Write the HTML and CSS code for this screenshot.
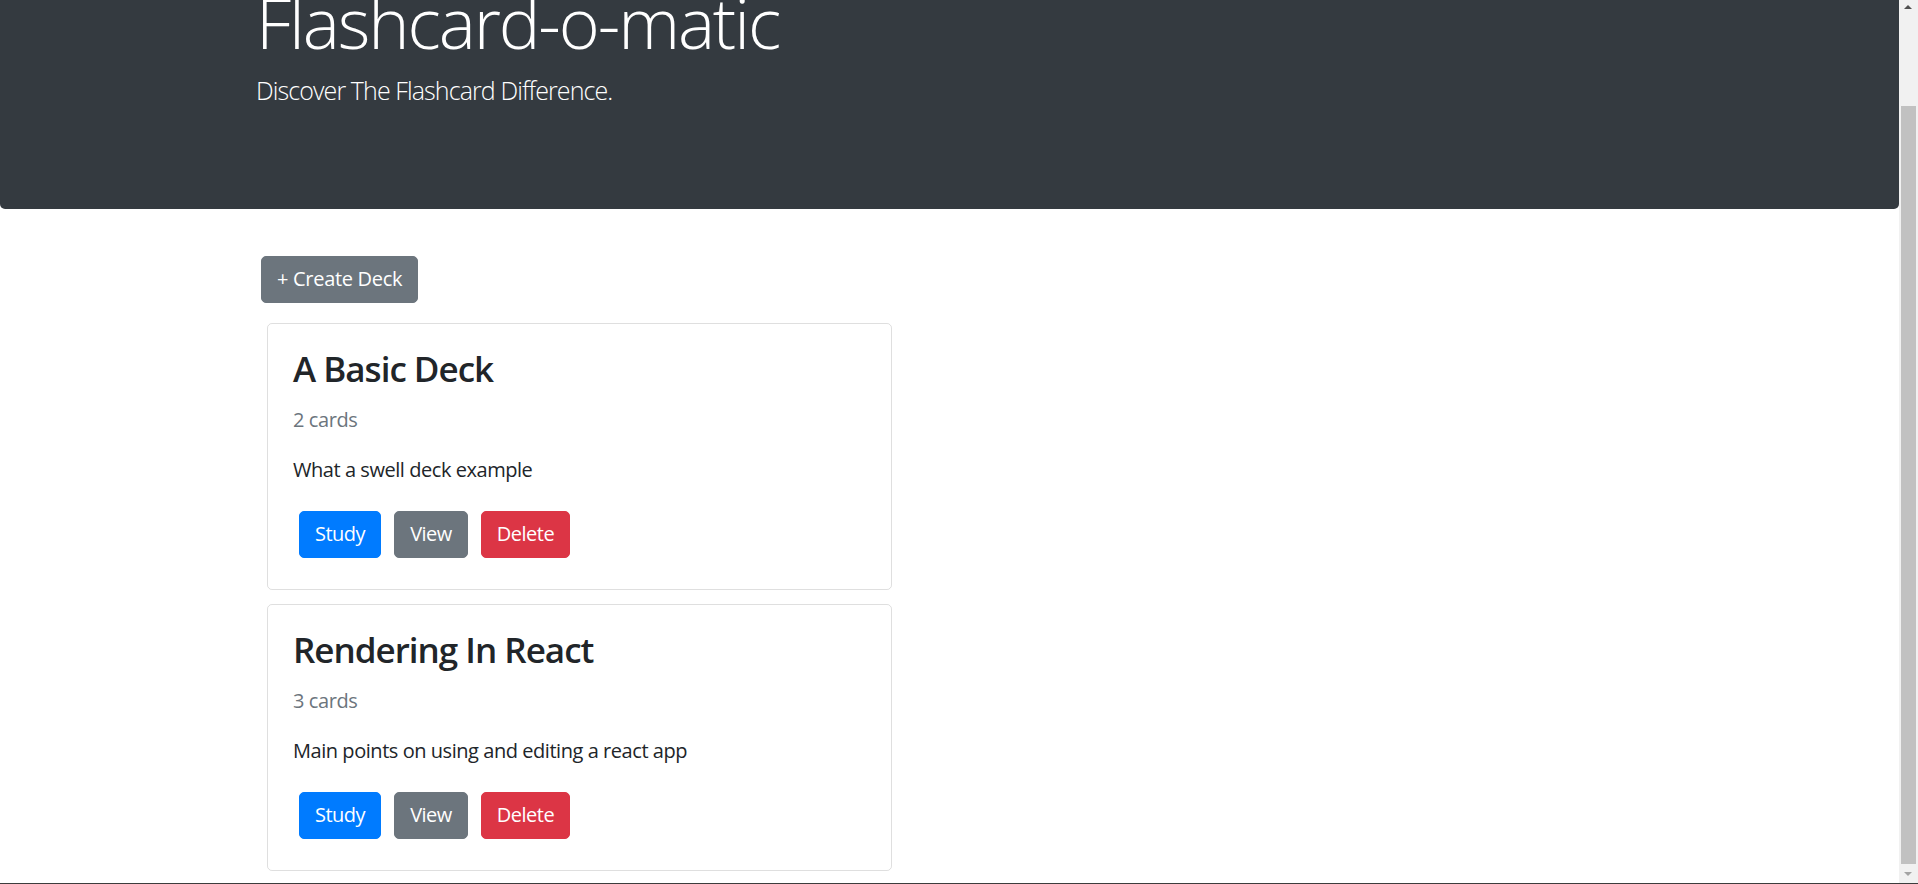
FILE: index.html
```html
<!DOCTYPE html>
<html lang="en">
<head>
<meta charset="utf-8">
<title>Flashcard-o-matic</title>
<link rel="stylesheet" href="styles.css">
</head>
<body>
<div class="page">
  <header class="jumbotron">
    <div class="container">
      <h1 class="display">Flashcard-o-matic</h1>
      <p class="lead">Discover The Flashcard Difference.</p>
    </div>
  </header>
  <main class="container">
    <button class="btn btn-secondary create-btn">+ Create Deck</button>
    <div class="deck-list">
      <div class="card">
        <h3 class="card-title">A Basic Deck</h3>
        <p class="card-count">2 cards</p>
        <p class="card-text">What a swell deck example</p>
        <div class="card-actions">
          <button class="btn btn-primary">Study</button>
          <button class="btn btn-secondary">View</button>
          <button class="btn btn-danger">Delete</button>
        </div>
      </div>
      <div class="card">
        <h3 class="card-title">Rendering In React</h3>
        <p class="card-count">3 cards</p>
        <p class="card-text">Main points on using and editing a react app</p>
        <div class="card-actions">
          <button class="btn btn-primary">Study</button>
          <button class="btn btn-secondary">View</button>
          <button class="btn btn-danger">Delete</button>
        </div>
      </div>
    </div>
  </main>
</div>
<div class="scrollbar">
  <span class="arrow arrow-up"></span>
  <span class="thumb"></span>
  <span class="arrow arrow-down"></span>
</div>
<div class="window-edge"></div>
</body>
</html>
```

FILE: styles.css
```css
html, body {
  margin: 0;
  padding: 0;
  height: 884px;
  overflow: hidden;
  background: #fff;
}

body {
  font-family: "Segoe UI", "Open Sans", "Noto Sans", sans-serif;
  color: #212529;
}

.page {
  margin-right: 19px;
}

.container {
  width: 1425px;
  margin: 0 auto;
  padding: 0 19px;
  box-sizing: border-box;
}

.jumbotron {
  background: #343a40;
  color: #fff;
  border-radius: 0 0 5px 5px;
  padding: 0 0 99px;
}

.display {
  margin: -20px 0 8px;
  font-size: 70px;
  line-height: 84px;
  font-weight: 300;
  letter-spacing: -2.1px;
}

.lead {
  margin: 0;
  font-size: 25px;
  line-height: 37.5px;
  font-weight: 300;
  letter-spacing: -0.9px;
}

main.container {
  padding-top: 47px;
}

.btn {
  font-family: inherit;
  font-size: 20px;
  line-height: 30px;
  padding: 7.5px 15px;
  border: 1px solid transparent;
  border-radius: 5px;
  color: #fff;
  letter-spacing: -0.5px;
  cursor: pointer;
}

.btn-primary { background: #007bff; border-color: #007bff; }
.btn-secondary { background: #6c757d; border-color: #6c757d; }
.btn-danger { background: #dc3545; border-color: #dc3545; }

.create-btn {
  margin-left: 5px;
  display: block;
  letter-spacing: -0.3px;
}

.deck-list {
  margin: 20px 0 0 11px;
  width: 625px;
  display: flex;
  flex-direction: column;
  gap: 14px;
}

.card {
  border: 1px solid rgba(0, 0, 0, 0.125);
  border-radius: 5px;
  padding: 24px 25px 31px;
}

.card-title {
  margin: 0 0 15px;
  font-size: 35px;
  line-height: 42px;
  font-weight: 600;
  letter-spacing: -1px;
}

.card-count {
  margin: 0 0 20px;
  font-size: 20px;
  line-height: 30px;
  color: #6c757d;
  letter-spacing: -0.4px;
}

.card-text {
  margin: 0 0 26px;
  font-size: 20px;
  line-height: 30px;
  letter-spacing: -0.45px;
}

.card-actions {
  display: flex;
  gap: 13px;
  padding-left: 6px;
}

.scrollbar {
  position: fixed;
  top: 0;
  right: 0;
  width: 19px;
  height: 883px;
  background: #f1f1f1;
}

.thumb {
  position: absolute;
  left: 2px;
  right: 2px;
  top: 106px;
  bottom: 19px;
  background: #c1c1c1;
}

.arrow {
  position: absolute;
  left: 5px;
  width: 0;
  height: 0;
  border-left: 4.5px solid transparent;
  border-right: 4.5px solid transparent;
}

.arrow-up {
  top: 5px;
  border-bottom: 4px solid #505050;
}

.arrow-down {
  bottom: 7px;
  border-top: 4px solid #a3a3a3;
}

.window-edge {
  position: fixed;
  left: 0;
  right: 0;
  bottom: 0;
  height: 1px;
  background: #3c3c3c;
}
```
